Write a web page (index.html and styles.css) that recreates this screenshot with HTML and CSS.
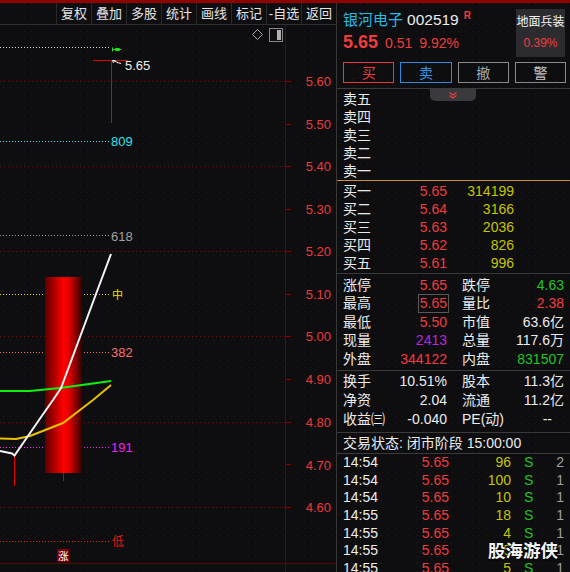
FILE: index.html
```html
<!DOCTYPE html>
<html lang="zh-CN">
<head>
<meta charset="utf-8">
<title>银河电子 002519</title>
<link rel="stylesheet" href="styles.css">
</head>
<body>
<div class="topbar"></div>
<div class="main">
  <div class="left">
    <div class="toolbar">
      <span class="tb-btn">复权</span>
      <span class="tb-btn">叠加</span>
      <span class="tb-btn">多股</span>
      <span class="tb-btn">统计</span>
      <span class="tb-btn">画线</span>
      <span class="tb-btn">标记</span>
      <span class="tb-btn">-自选</span>
      <span class="tb-btn">返回</span>
    </div>
    <svg class="chart" width="336" height="547" viewBox="0 25 336 547" xmlns="http://www.w3.org/2000/svg">
      <defs>
        <linearGradient id="cg" x1="0" x2="1" y1="0" y2="0">
          <stop offset="0" stop-color="#5a0000"/>
          <stop offset="0.3" stop-color="#c00000"/>
          <stop offset="0.5" stop-color="#ff0000"/>
          <stop offset="0.65" stop-color="#e00000"/>
          <stop offset="1" stop-color="#380000"/>
        </linearGradient>
        <linearGradient id="hg" x1="0" x2="1" y1="0" y2="0">
          <stop offset="0" stop-color="#500000"/>
          <stop offset="0.45" stop-color="#e00000"/>
          <stop offset="1" stop-color="#300000"/>
        </linearGradient>
      </defs>
      <!-- grid -->
      <g stroke="#720808" stroke-width="1" stroke-dasharray="1 3">
        <line x1="0" y1="81.5" x2="285" y2="81.5"/>
        <line x1="0" y1="166.5" x2="285" y2="166.5"/>
        <line x1="0" y1="251.5" x2="285" y2="251.5"/>
        <line x1="0" y1="336.5" x2="285" y2="336.5"/>
        <line x1="0" y1="422.5" x2="285" y2="422.5"/>
        <line x1="0" y1="507.5" x2="285" y2="507.5"/>
      </g>
      <!-- axis -->
      <line x1="285.5" y1="25" x2="285.5" y2="572" stroke="#6a0000"/>
      <line x1="0" y1="563.5" x2="336" y2="563.5" stroke="#5e0000"/>
      <g stroke="#8a0000">
        <line x1="286" y1="81.5" x2="291" y2="81.5"/>
        <line x1="286" y1="124.5" x2="291" y2="124.5"/>
        <line x1="286" y1="166.5" x2="291" y2="166.5"/>
        <line x1="286" y1="209.5" x2="291" y2="209.5"/>
        <line x1="286" y1="251.5" x2="291" y2="251.5"/>
        <line x1="286" y1="294.5" x2="291" y2="294.5"/>
        <line x1="286" y1="336.5" x2="291" y2="336.5"/>
        <line x1="286" y1="379.5" x2="291" y2="379.5"/>
        <line x1="286" y1="422.5" x2="291" y2="422.5"/>
        <line x1="286" y1="464.5" x2="291" y2="464.5"/>
        <line x1="286" y1="507.5" x2="291" y2="507.5"/>
      </g>
      <g class="axis-label" text-anchor="end" font-size="13" fill="#ec3a3a">
        <text x="331" y="85.5">5.60</text>
        <text x="331" y="128.5">5.50</text>
        <text x="331" y="171">5.40</text>
        <text x="331" y="213.5">5.30</text>
        <text x="331" y="256">5.20</text>
        <text x="331" y="298.5">5.10</text>
        <text x="331" y="341">5.00</text>
        <text x="331" y="384">4.90</text>
        <text x="331" y="426.5">4.80</text>
        <text x="331" y="469.5">4.70</text>
        <text x="331" y="511.5">4.60</text>
      </g>
      <!-- top right icons -->
      <polygon points="257.5,29.5 262.5,34.5 257.5,39.5 252.5,34.5" fill="none" stroke="#a8a8a8"/>
      <rect x="269.5" y="28.5" width="13" height="13" fill="none" stroke="#8a8a8a"/>
      <rect x="277" y="30" width="4" height="10" fill="#b0b0b0"/>
      <!-- fib levels -->
      <g stroke-width="1" stroke-dasharray="1 2">
        <line x1="0" y1="47.5" x2="111" y2="47.5" stroke="#e0e0e0"/>
        <line x1="0" y1="141.5" x2="111" y2="141.5" stroke="#30e0e8"/>
        <line x1="0" y1="235.5" x2="111" y2="235.5" stroke="#a0a0a0"/>
        <line x1="0" y1="294.5" x2="111" y2="294.5" stroke="#e8e000"/>
        <line x1="0" y1="352.5" x2="111" y2="352.5" stroke="#ff7070"/>
        <line x1="0" y1="447.5" x2="111" y2="447.5" stroke="#f020f0"/>
        <line x1="0" y1="541.5" x2="111" y2="541.5" stroke="#e01818"/>
      </g>
      <g fill="none" stroke="#20e020" stroke-width="1">
        <path d="M112.5 47.5 V51.5 M112.5 49.5 H121.5 M115.5 48.5 H119.5 V50.5 H115.5 Z"/>
      </g>
      <g font-size="13">
        <text x="111" y="146" fill="#30e0e8">809</text>
        <text x="111" y="240.5" fill="#a0a0a0">618</text>
        <text x="111" y="357" fill="#ff7070">382</text>
        <text x="111" y="452" fill="#f020f0">191</text>
        <text x="125" y="70" fill="#f0f0f0">5.65</text>
      </g>
      <text x="112" y="299" font-size="11" fill="#e8e000" class="cjk">中</text>
      <text x="112" y="546" font-size="12" fill="#e01818" class="cjk">低</text>
      <!-- last price marker -->
      <line x1="93" y1="60.5" x2="128" y2="60.5" stroke="#e00000"/>
      <line x1="111.5" y1="60" x2="111.5" y2="123" stroke="#e00000"/>
      <path d="M112.5 60.5 L118 62.5 M112.5 60.5 L115.5 60.5 M112.5 60.5 L113.5 63 M117 62.5 L121 63.5" stroke="#f0f0f0" fill="none"/>
      <!-- candles -->
      <rect x="45" y="277" width="37" height="196" fill="url(#cg)"/>
      <line x1="63.5" y1="473" x2="63.5" y2="481" stroke="#d00000"/>
      <line x1="14.5" y1="455" x2="14.5" y2="486" stroke="#e00000"/>
      <line x1="0" y1="477.5" x2="33" y2="477.5" stroke="url(#hg)"/>
      <!-- lines -->
      <polyline points="0,391 30,391 60,388 111,381" fill="none" stroke="#10f010" stroke-width="2"/>
      <polyline points="0,438.5 16,439 30,436 63,423 93,400 111,385" fill="none" stroke="#e8c000" stroke-width="2"/>
      <polyline points="0,451 12,453.5 14.5,455.5 39,420 53,400 61,388 96,294 111,254" fill="none" stroke="#f4f4f4" stroke-width="2"/>
      <!-- zhang badge -->
      <rect x="57" y="549" width="12" height="13" fill="#7a0000"/>
      <text x="58" y="559.5" font-size="10.5" fill="#ffffff" class="cjk">涨</text>
    </svg>
  </div>

  <div class="right">
    <div class="head">
      <div class="head-info">
        <div class="name-row"><span class="name">银河电子</span><span class="code">002519</span><span class="rtag">R</span></div>
        <div class="price-row"><span class="price">5.65</span><span class="chg">0.51</span><span class="pct">9.92%</span></div>
      </div>
      <div class="sector">
        <div class="sector-name">地面兵装</div>
        <div class="sector-pct">0.39%</div>
      </div>
    </div>

    <div class="btns">
      <span class="btn btn-buy">买</span>
      <span class="btn btn-sell">卖</span>
      <span class="btn btn-cancel">撤</span>
      <span class="btn btn-alert">警</span>
    </div>

    <div class="book sell">
      <div class="tab"><svg width="8" height="7" viewBox="0 0 8 7"><path d="M0.5 0.5 L4 3 L7.5 0.5 M0.5 3.5 L4 6 L7.5 3.5" fill="none" stroke="#f03c3c" stroke-width="1.2"/></svg></div>
      <div class="row"><span>卖五</span><span></span><span></span></div>
      <div class="row"><span>卖四</span><span></span><span></span></div>
      <div class="row"><span>卖三</span><span></span><span></span></div>
      <div class="row"><span>卖二</span><span></span><span></span></div>
      <div class="row"><span>卖一</span><span></span><span></span></div>
    </div>

    <div class="book buy">
      <div class="row"><span>买一</span><span class="num red">5.65</span><span class="num vol">314199</span></div>
      <div class="row"><span>买二</span><span class="num red">5.64</span><span class="num vol">3166</span></div>
      <div class="row"><span>买三</span><span class="num red">5.63</span><span class="num vol">2036</span></div>
      <div class="row"><span>买四</span><span class="num red">5.62</span><span class="num vol">826</span></div>
      <div class="row"><span>买五</span><span class="num red">5.61</span><span class="num vol">996</span></div>
    </div>

    <div class="stats stats1">
      <div class="srow"><div class="cell"><span>涨停</span><span class="red">5.65</span></div><div class="cell"><span>跌停</span><span class="green">4.63</span></div></div>
      <div class="srow"><div class="cell"><span>最高</span><span class="red boxed">5.65</span></div><div class="cell"><span>量比</span><span class="red">2.38</span></div></div>
      <div class="srow"><div class="cell"><span>最低</span><span class="red">5.50</span></div><div class="cell"><span>市值</span><span>63.6亿</span></div></div>
      <div class="srow"><div class="cell"><span>现量</span><span class="purple">2413</span></div><div class="cell"><span>总量</span><span>117.6万</span></div></div>
      <div class="srow"><div class="cell"><span>外盘</span><span class="red">344122</span></div><div class="cell"><span>内盘</span><span class="green">831507</span></div></div>
    </div>

    <div class="stats stats2">
      <div class="srow"><div class="cell"><span>换手</span><span>10.51%</span></div><div class="cell"><span>股本</span><span>11.3亿</span></div></div>
      <div class="srow"><div class="cell"><span>净资</span><span>2.04</span></div><div class="cell"><span>流通</span><span>11.2亿</span></div></div>
      <div class="srow"><div class="cell"><span>收益㈢</span><span>-0.040</span></div><div class="cell"><span>PE(动)</span><span class="dash">--</span></div></div>
    </div>

    <div class="status">交易状态: 闭市阶段 15:00:00</div>

    <div class="ticks">
      <div class="trow"><span>14:54</span><span class="num red">5.65</span><span class="num vol">96</span><span class="s">S</span><span class="num cnt">2</span></div>
      <div class="trow"><span>14:54</span><span class="num red">5.65</span><span class="num vol">100</span><span class="s">S</span><span class="num cnt">1</span></div>
      <div class="trow"><span>14:54</span><span class="num red">5.65</span><span class="num vol">10</span><span class="s">S</span><span class="num cnt">1</span></div>
      <div class="trow"><span>14:55</span><span class="num red">5.65</span><span class="num vol">18</span><span class="s">S</span><span class="num cnt">1</span></div>
      <div class="trow"><span>14:55</span><span class="num red">5.65</span><span class="num vol">4</span><span class="s">S</span><span class="num cnt">1</span></div>
      <div class="trow"><span>14:55</span><span class="num red">5.65</span><span class="num vol">5</span><span class="s">S</span><span class="num cnt">1</span></div>
      <div class="trow"><span>14:55</span><span class="num red">5.65</span><span class="num vol">5</span><span class="s">S</span><span class="num cnt">1</span></div>
    </div>

    <div class="watermark">股海游侠</div>
  </div>
</div>
</body>
</html>
```

FILE: styles.css
```css
* {
  box-sizing: border-box;
  margin: 0;
  padding: 0;
}

html, body {
  width: 570px;
  height: 572px;
  overflow: hidden;
}

body {
  background-color: #0e0e11;
  background-image: radial-gradient(circle, #19191e 0.7px, transparent 1px);
  background-size: 7px 7px;
  font-family: "Liberation Sans", "Noto Sans CJK SC", sans-serif;
  color: #ececec;
  font-size: 14px;
}

.topbar {
  height: 3px;
  background: #900000;
}

.main {
  display: flex;
  height: 569px;
}

/* ---------- left: toolbar + chart ---------- */
.left {
  width: 336px;
  display: flex;
  flex-direction: column;
}

.toolbar {
  height: 22px;
  border-bottom: 1px solid #303030;
  display: flex;
  justify-content: flex-end;
}

.tb-btn {
  width: 35px;
  border-left: 1px solid #2a2a2a;
  font-size: 13px;
  line-height: 21px;
  text-align: center;
  color: #e4e4e4;
  white-space: nowrap;
}

.chart {
  display: block;
}

.chart text {
  font-family: "Liberation Sans", "Noto Sans CJK SC", sans-serif;
}

.chart text.cjk {
  font-family: "Noto Sans CJK SC", sans-serif;
}

/* ---------- right: quote panel ---------- */
.right {
  width: 234px;
  border-left: 1px solid #383838;
  position: relative;
}

.head {
  display: flex;
  justify-content: space-between;
  padding: 6px 5px 0 6px;
  height: 54px;
}

.name-row {
  height: 19px;
  line-height: 19px;
  white-space: nowrap;
}

.name {
  font-size: 15px;
  color: #22bde6;
  font-family: "Noto Sans CJK SC", sans-serif;
}

.code {
  font-size: 15.5px;
  color: #ececec;
  margin-left: 4px;
}

.rtag {
  font-size: 10px;
  font-weight: bold;
  color: #f03c3c;
  margin-left: 5px;
  vertical-align: top;
  line-height: 14px;
}

.price-row {
  margin-top: 3px;
  height: 23px;
  line-height: 23px;
  white-space: nowrap;
  color: #f03c3c;
}

.price {
  font-size: 18px;
  font-weight: bold;
}

.chg {
  font-size: 14px;
  margin-left: 7px;
}

.pct {
  font-size: 14px;
  margin-left: 7px;
}

.sector {
  width: 49px;
  height: 48px;
  background: #2c2c30;
  text-align: center;
  padding-top: 3px;
}

.sector-name {
  font-size: 12px;
  line-height: 17px;
  color: #f4f4f4;
  font-family: "Noto Sans CJK SC", sans-serif;
  white-space: nowrap;
}

.sector-pct {
  margin-top: 6px;
  font-size: 12px;
  line-height: 17px;
  color: #f03c3c;
}

.btns {
  display: grid;
  grid-template-columns: repeat(4, 1fr);
  column-gap: 6px;
  padding: 0 4px 0 6px;
  margin-top: 5px;
  height: 21px;
}

.btn {
  border: 1px solid #888;
  line-height: 19px;
  text-align: center;
  font-size: 14px;
  font-family: "Noto Sans CJK SC", sans-serif;
}

.btn-buy {
  border-color: #e83a3a;
  color: #f03c3c;
}

.btn-sell {
  border-color: #2f8be0;
  color: #3a94ea;
}

.btn-cancel {
  border-color: #8a8a8a;
  color: #a8a8a8;
}

.btn-alert {
  border-color: #8a8a8a;
  color: #c8c8c8;
}

.book {
  position: relative;
}

.book.sell {
  margin-top: 5px;
  border-top: 1px solid #3a3a3a;
  border-bottom: 1px solid #c8903c;
  padding-top: 1px;
}

.book.buy {
  padding: 1px 0;
  border-bottom: 1px solid #3a3a3a;
}

.tab {
  position: absolute;
  top: 0;
  left: 93px;
  width: 46px;
  height: 12px;
  background: #3a3a3e;
  border-radius: 0 0 5px 5px;
  display: flex;
  justify-content: center;
  align-items: center;
}

.tab svg {
  display: block;
}

.row {
  display: grid;
  grid-template-columns: 40px 64px 67px;
  height: 18px;
  line-height: 18px;
  padding-left: 6px;
  white-space: nowrap;
}

.num {
  text-align: right;
}

.red {
  color: #f03c3c;
}

.green {
  color: #22c422;
}

.purple {
  color: #b52ad8;
}

.vol {
  color: #c4c400;
}

.stats {
  padding: 1.5px 6px;
  border-bottom: 1px solid #3a3a3a;
}

.stats2 {
  padding-bottom: 3.7px;
}

.srow {
  display: grid;
  grid-template-columns: 104px 102px;
  column-gap: 15px;
  height: 18.6px;
  line-height: 18.6px;
  white-space: nowrap;
}

.cell {
  display: flex;
  justify-content: space-between;
  align-items: center;
}

.boxed {
  display: inline-block;
  border: 1px solid #585858;
  line-height: 17px;
  padding: 0 1px;
  margin-right: -2px;
}

.dash {
  padding-right: 12px;
}

.status {
  height: 21px;
  line-height: 20px;
  padding-left: 6px;
  border-bottom: 1px solid #3a3a3a;
  white-space: nowrap;
}

.trow {
  display: grid;
  grid-template-columns: 50px 56px 62px 30px 23px;
  height: 17.7px;
  line-height: 17.7px;
  padding-left: 6px;
  white-space: nowrap;
}

.s {
  color: #22c422;
  padding-left: 13px;
}

.cnt {
  color: #a0a0a0;
}

.watermark {
  position: absolute;
  left: 151px;
  top: 537px;
  font-size: 17.5px;
  line-height: 20px;
  font-weight: bold;
  color: #f2f2f2;
  font-family: "Noto Sans CJK SC", sans-serif;
  text-shadow: 0 0 2px #000, 1px 1px 2px #000;
  white-space: nowrap;
}
```
